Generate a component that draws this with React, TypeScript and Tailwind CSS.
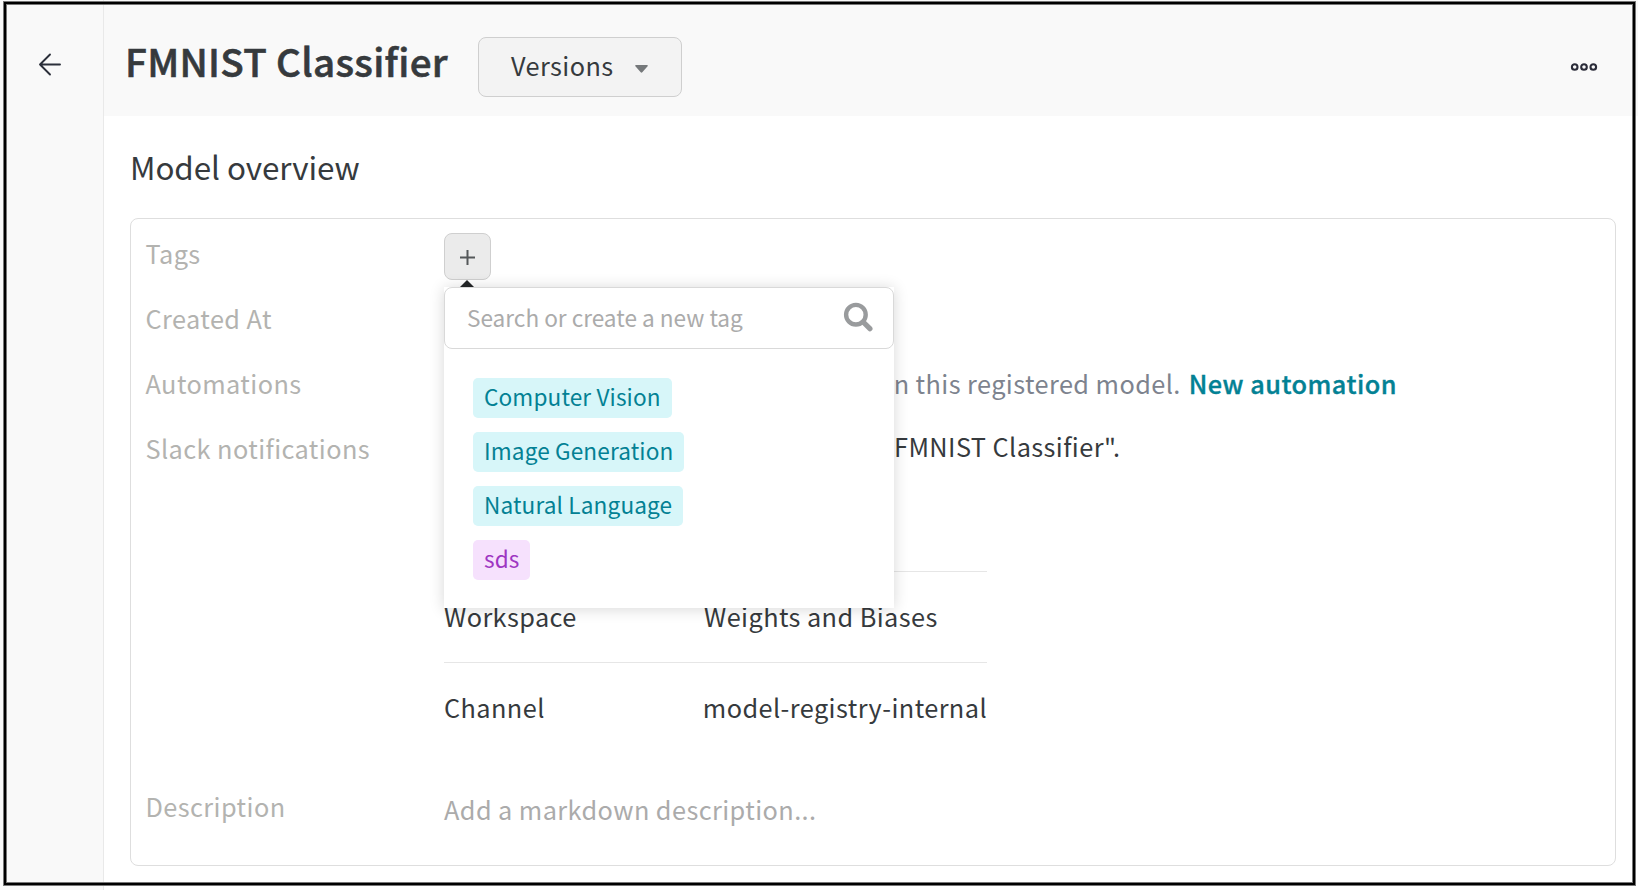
import React from "react";

const labelClass = "w-[298.5px] shrink-0 whitespace-nowrap text-[#b3b3b0]";

const tags = [
  { name: "Computer Vision", style: "w-[199px] bg-[#d7f6f9] text-[#038194]" },
  { name: "Image Generation", style: "w-[211px] bg-[#d7f6f9] text-[#038194]" },
  { name: "Natural Language", style: "w-[210px] bg-[#d7f6f9] text-[#038194]" },
  { name: "sds", style: "w-[57px] bg-[#f6e1fd] text-[#9e36c2]" },
];

function TagMenu() {
  return (
    <div className="absolute left-0 top-[47px] z-10 w-[450px]">
      <svg className="ml-4 block" width="14" height="7" viewBox="0 0 14 7">
        <path d="M0 7 7 0l7 7z" fill="#222426" />
      </svg>
      <div className="h-[321px] bg-white shadow-[0_1px_14px_rgba(0,0,0,0.16)]">
        <div className="flex h-[62px] items-center justify-between rounded-lg border border-[#d9d9d9] bg-white pl-[22px] pr-5">
          <span className="text-[22.6px] leading-8 tracking-normal text-[#ababab]">Search or create a new tag</span>
          <svg className="-mt-[2px]" width="30" height="30" viewBox="0 0 30 30" fill="none" stroke="#999b9d">
            <circle cx="12.9" cy="12.7" r="9.8" strokeWidth="4.4" />
            <path d="m20.2 20 6.7 6.7" strokeWidth="5.2" strokeLinecap="round" />
          </svg>
        </div>
        <div className="flex flex-col gap-[14px] pl-[29px] pt-[29px]">
          {tags.map((t) => (
            <span key={t.name} className={`flex h-10 items-center whitespace-nowrap rounded-[5px] pb-[2px] pl-[11px] text-[22.6px] leading-8 tracking-[0.13px] ${t.style}`}>
              {t.name}
            </span>
          ))}
        </div>
      </div>
    </div>
  );
}

export default function App() {
  return (
    <div className="relative flex h-[890px] w-[1638px] overflow-hidden bg-white font-['Noto_Sans_CJK_SC','Open_Sans',sans-serif] text-[25.3px] leading-9 tracking-[0.42px] text-[#363a3d]">
      <aside className="w-[104px] shrink-0 border-r border-[#e9e9e9] bg-[#f9f9f9] pl-[38px] pt-[53px]">
        <svg width="24" height="24" viewBox="0 0 24 24" fill="none" stroke="#2b2f3a" strokeWidth="1.9" strokeLinecap="round" strokeLinejoin="round">
          <path d="M22 11.5H2M12 1.5l-10 10 10 10" />
        </svg>
      </aside>
      <div className="flex min-w-0 flex-1 flex-col">
        <header className="flex h-[116px] shrink-0 bg-[#f9f9f9] pl-[22px]">
          <h1 className="-ml-px mt-[33px] w-[353px] whitespace-nowrap text-[38.6px] font-medium leading-[54px] tracking-[0.3px] [-webkit-text-stroke:0.6px_#363a3d]">FMNIST Classifier</h1>
          <button className="mt-[37px] flex h-[60px] w-[204px] items-center rounded-lg border border-[#cfcfcf] bg-[#f3f3f3] pl-8">
            <span className="-mt-1 w-[124px] text-left">Versions</span>
            <svg className="mt-1" width="13" height="8" viewBox="0 0 13 8">
              <path d="M1 0h11c.8 0 1.1.8.6 1.3L7.3 7.2c-.5.6-1.1.6-1.6 0L.4 1.3C-.1.8.2 0 1 0z" fill="#75787a" />
            </svg>
          </button>
          <svg className="ml-[888px] mt-[62px]" width="28" height="10" viewBox="0 0 28 10" fill="none" stroke="#2b2c39" strokeWidth="2.1">
            <circle cx="4.7" cy="5" r="2.8" />
            <circle cx="14" cy="5" r="2.8" />
            <circle cx="23.3" cy="5" r="2.8" />
          </svg>
        </header>
        <main className="flex flex-col pl-[26px] pt-[28px]">
          <h2 className="text-[31.4px] leading-[46px] tracking-[-0.07px]">Model overview</h2>
          <section className="mt-[28px] flex h-[648px] w-[1486px] flex-col rounded-lg border border-[#dedede] pl-[14.5px] pt-[14px]">
            <div className="flex h-[65px]">
              <div className={`${labelClass} pt-[2px]`}>Tags</div>
              <div className="relative h-[47px] w-[47px]">
                <button className="flex h-[47px] w-[47px] items-center justify-center rounded-lg border border-[#cfcfcf] bg-[#ebebeb]">
                  <svg className="mt-px" width="15" height="15" viewBox="0 0 15 15" stroke="#55585a" strokeWidth="2">
                    <path d="M7.5 0v15M0 7.5h15" />
                  </svg>
                </button>
                <TagMenu />
              </div>
            </div>
            <div className="flex h-[65px]">
              <div className={`${labelClass} pt-[2px]`}>Created At</div>
            </div>
            <div className="flex h-[65px] pt-[2px]">
              <div className={labelClass}>Automations</div>
              <div className="flex w-[953px] justify-end gap-[8px] whitespace-nowrap">
                <span className="text-[#7d838e]">n this registered model.</span>
                <a className="font-medium tracking-[0.48px] text-[#038194] [-webkit-text-stroke:0.35px_#038194]">New automation</a>
              </div>
            </div>
            <div className="flex h-[358px] pt-[2px]">
              <div className={labelClass}>Slack notifications</div>
              <div className="-mt-[2px] w-[543px]">
                <div className="h-[143px] whitespace-nowrap pl-[450px]">FMNIST Classifier".</div>
                <div className="flex h-[91px] border-t border-[#e6e6e6] pt-[26px]">
                  <span className="w-[260px]">Workspace</span>
                  <span className="whitespace-nowrap">Weights and Biases</span>
                </div>
                <div className="flex h-[91px] border-t border-[#e6e6e6] pt-[26px]">
                  <span className="w-[260px]">Channel</span>
                  <span className="whitespace-nowrap">model-registry-internal</span>
                </div>
              </div>
            </div>
            <div className="flex pt-[2px]">
              <div className={labelClass}>Description</div>
              <div className="mt-[3px] text-[#ababab]">Add a markdown description...</div>
            </div>
          </section>
        </main>
      </div>
      <div className="pointer-events-none absolute left-[3px] top-[1px] z-20 h-[885px] w-[1633px] border border-[#777]">
        <div className="h-full w-full border-2 border-black">
          <div className="h-full w-full border border-[#777]" />
        </div>
      </div>
    </div>
  );
}
